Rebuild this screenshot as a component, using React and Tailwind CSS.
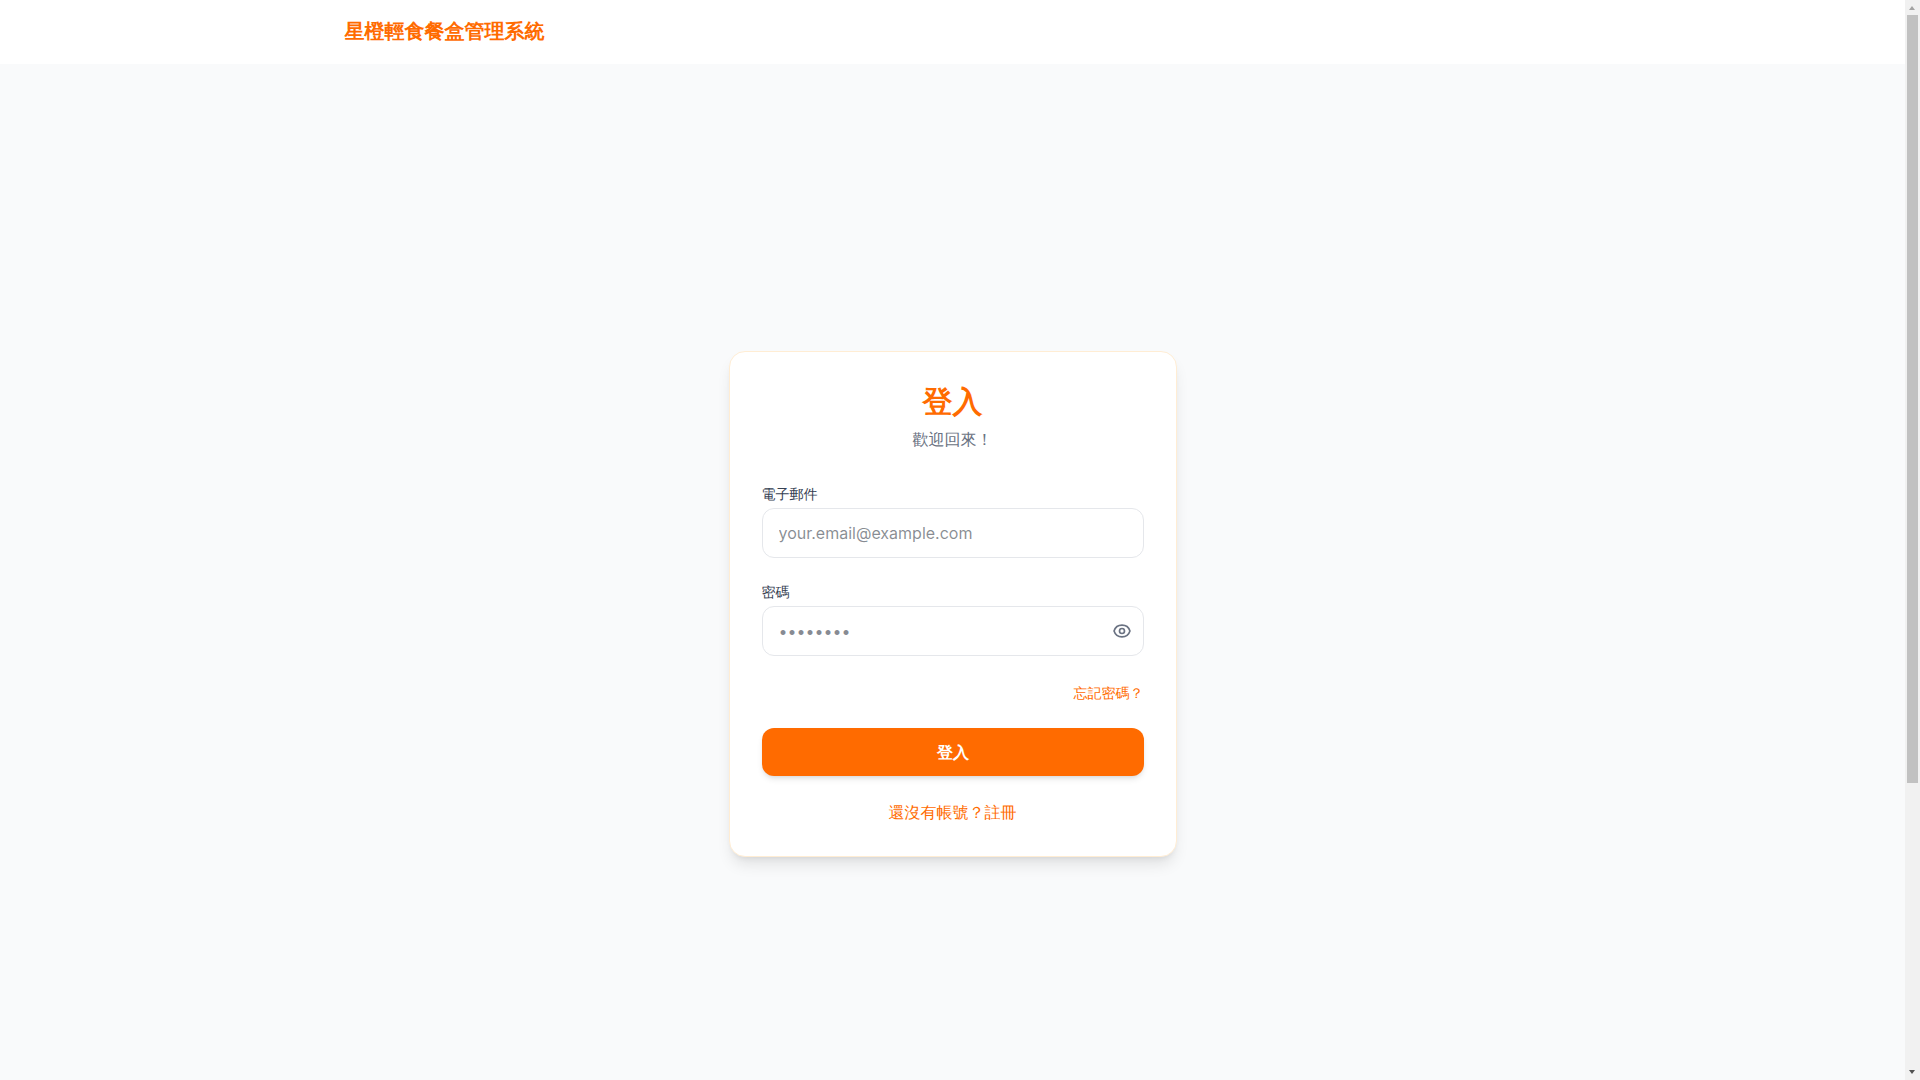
import { HiOutlineEye } from "react-icons/hi";

function Scrollbar() {
  return (
    <aside className="relative h-screen w-[15px] shrink-0 bg-[#f1f1f1]">
      <div className="absolute left-1 top-[6px] h-0 w-0 border-x-[3.5px] border-b-[4px] border-x-transparent border-b-[#a3a3a3]" />
      <div className="absolute left-[2px] top-[15px] h-[768px] w-[11px] bg-[#c1c1c1]" />
      <div className="absolute bottom-[6px] left-1 h-0 w-0 border-x-[3.5px] border-t-[4px] border-x-transparent border-t-[#505050]" />
    </aside>
  );
}

export default function App() {
  return (
    <div className="flex h-screen overflow-hidden bg-[#f9fafb] font-['Inter',sans-serif] text-gray-900 [text-rendering:geometricPrecision]">
      <div className="h-screen flex-1 overflow-hidden">
        <header className="h-16 bg-white">
          <div className="mx-auto flex h-full max-w-7xl items-center px-8 pb-[2px]">
            <span className="text-xl font-bold text-[#ff6b00]">星橙輕食餐盒管理系統</span>
          </div>
        </header>
        <main className="flex min-h-screen items-center justify-center">
          <div className="w-full max-w-md rounded-2xl border border-orange-100 bg-white p-8 shadow-lg">
            <div className="mb-[33px] text-center">
              <h1 className="text-3xl font-bold text-[#ff6b00]">登入</h1>
              <p className="mt-[7px] text-gray-500">歡迎回來！</p>
            </div>
            <form>
              <div className="mb-6">
                <label className="mb-[3px] block pt-px text-sm text-gray-700">電子郵件</label>
                <input
                  type="email"
                  placeholder="your.email@example.com"
                  className="w-full rounded-xl border border-gray-200 px-4 py-3 outline-none"
                />
              </div>
              <div className="mb-7">
                <label className="mb-[3px] block pt-px text-sm text-gray-700">密碼</label>
                <div className="relative">
                  <input
                    type="password"
                    placeholder="••••••••"
                    className="w-full rounded-xl border border-gray-200 px-4 py-3 pr-12 outline-none"
                  />
                  <button type="button" className="absolute right-[6px] top-1/2 flex h-8 w-8 -translate-y-1/2 items-center justify-center text-gray-500">
                    <HiOutlineEye size={20} />
                  </button>
                </div>
              </div>
              <div className="mb-6 flex justify-end">
                <a className="text-sm text-[#ff6b00]">忘記密碼？</a>
              </div>
              <button type="button" className="h-12 w-full rounded-xl bg-[#ff6b00] font-semibold text-white shadow-md">登入</button>
            </form>
            <div className="mt-6 text-center">
              <a className="text-[#ff6b00]">還沒有帳號？註冊</a>
            </div>
          </div>
        </main>
      </div>
      <Scrollbar />
    </div>
  );
}
